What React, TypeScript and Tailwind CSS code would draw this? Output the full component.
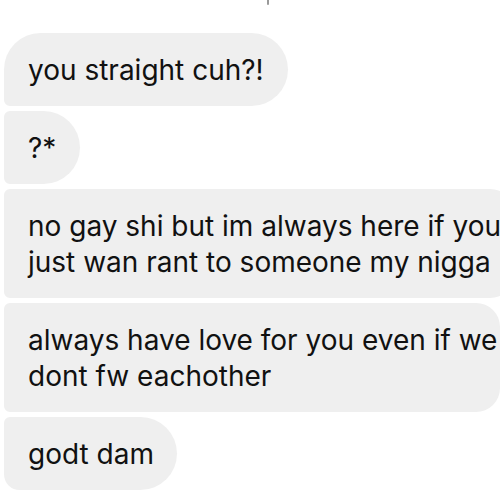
import React from "react";

const base =
  "bg-[#efefef] text-[#111111] text-[28px] leading-[36px] pl-6 py-[18.5px] shrink-0 whitespace-nowrap overflow-visible";

export default function App() {
  return (
    <div
      className="w-[500px] h-[500px] bg-white overflow-hidden relative"
      style={{ fontFamily: "Inter, 'Noto Sans', sans-serif" }}
    >
      <div className="absolute left-[267px] top-0 w-[2px] h-[5px] bg-[#9a9a9a] rounded-b-sm" />
      <div className="flex flex-col items-start gap-[5px] pt-[33px] pl-[4px]">
        <div className={`${base} rounded-[37px] rounded-bl-[6px] w-[284px]`}>
          you straight cuh?!
        </div>
        <div className={`${base} rounded-r-[37px] rounded-l-[6px] w-[76px]`}>?*</div>
        <div className={`${base} rounded-l-[6px] rounded-r-[24px] w-[510px]`}>
          <div>no gay shi but im always here if you</div>
          <div>just wan rant to someone my nigga</div>
        </div>
        <div className={`${base} rounded-l-[6px] rounded-r-[24px] w-[496px]`}>
          <div>always have love for you even if we</div>
          <div>dont fw eachother</div>
        </div>
        <div className={`${base} rounded-r-[37px] rounded-tl-[6px] rounded-bl-[16px] w-[173px]`}>
          godt dam
        </div>
      </div>
    </div>
  );
}
